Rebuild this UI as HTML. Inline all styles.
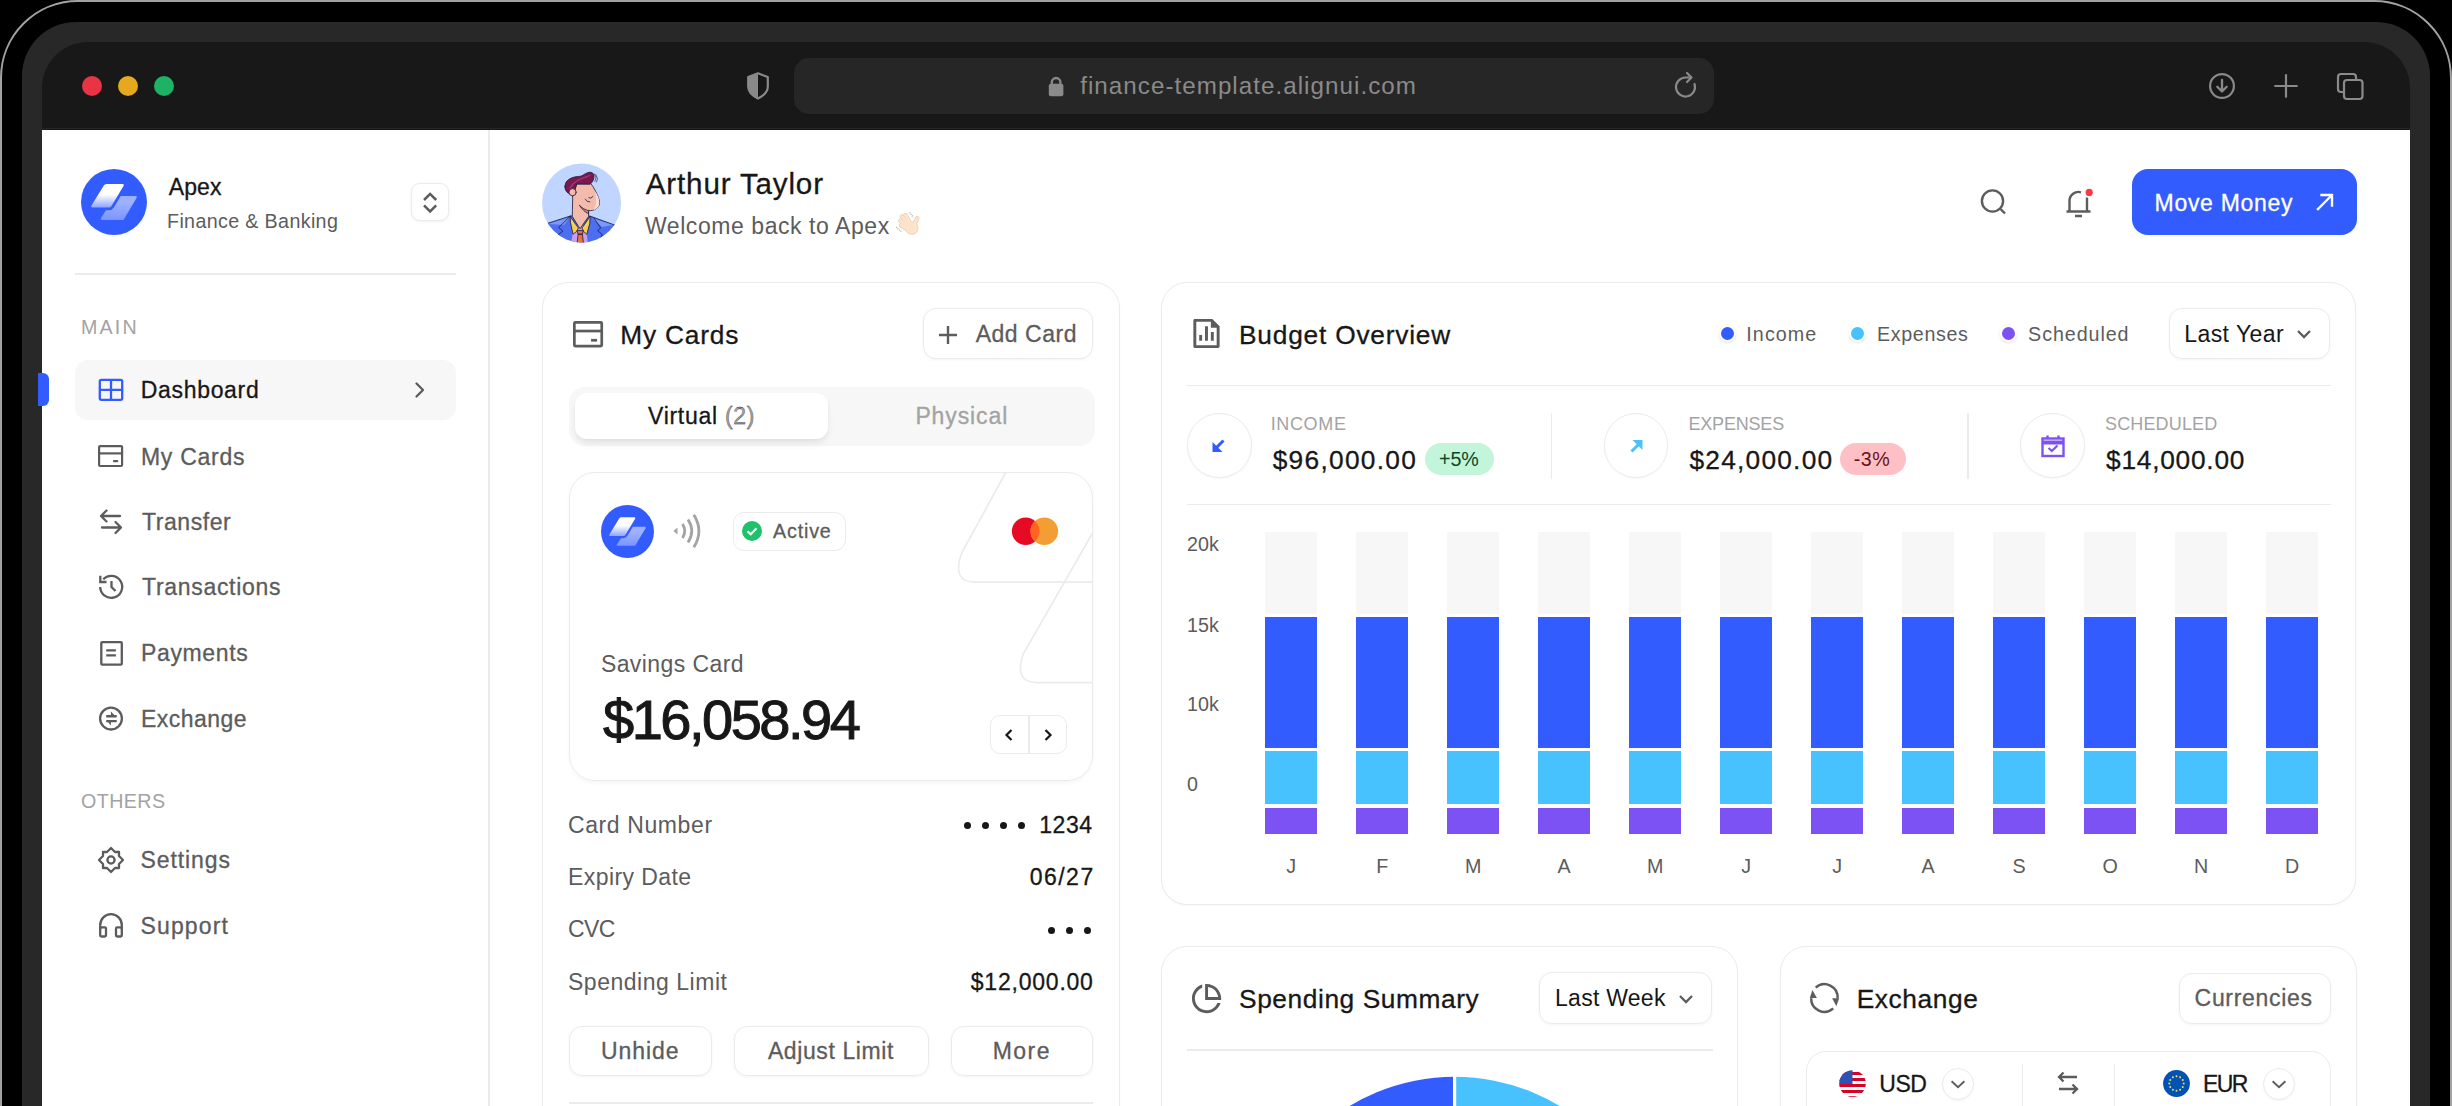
<!DOCTYPE html>
<html><head><meta charset="utf-8"><style>
html,body{margin:0;padding:0;}
body{width:2452px;height:1106px;overflow:hidden;position:relative;background:#000;font-family:"Liberation Sans", sans-serif;}
.t{position:absolute;white-space:nowrap;font-family:"Liberation Sans", sans-serif;}
svg{overflow:visible;}
</style></head><body>
<div style="position:absolute;left:0;top:0;width:2448px;height:1300px;border:2px solid #A2A2A2;border-radius:78px;background:#000"></div>
<div style="position:absolute;left:22.00px;top:22.00px;width:2408.00px;height:1300.00px;background:#282828;border-radius:54px;"></div>
<div style="position:absolute;left:42.00px;top:42.00px;width:2368.00px;height:1300.00px;background:#181818;border-radius:46px;"></div>
<div style="position:absolute;left:42.00px;top:128.00px;width:2368.00px;height:1.00px;background:#252525;"></div>
<div style="position:absolute;left:42.00px;top:130.00px;width:2368.00px;height:1000.00px;background:#FFFFFF;"></div>
<div style="position:absolute;left:82.00px;top:76.00px;width:20.00px;height:20.00px;background:#E93445;border-radius:50%;"></div>
<div style="position:absolute;left:118.00px;top:76.00px;width:20.00px;height:20.00px;background:#E5A81E;border-radius:50%;"></div>
<div style="position:absolute;left:154.00px;top:76.00px;width:20.00px;height:20.00px;background:#1DB264;border-radius:50%;"></div>
<svg style="position:absolute;left:747.00px;top:72.00px;" width="22.00" height="28.00" viewBox="0 0 22 28"><path d="M11 1.3 L20.8 5 V14.5 C20.8 19.5 16.5 23.8 11 26.6 C5.5 23.8 1.2 19.5 1.2 14.5 V5 Z" fill="none" stroke="#8A8A8A" stroke-width="2.2" stroke-linejoin="round"/><path d="M11 1.3 L1.2 5 V14.5 C1.2 19.5 5.5 23.8 11 26.6 Z" fill="#8A8A8A"/></svg>
<div style="position:absolute;left:794.00px;top:58.00px;width:920.00px;height:56.00px;background:#262626;border-radius:15px;"></div>
<svg style="position:absolute;left:1046.00px;top:75.00px;" width="20.00" height="24.00" viewBox="0 0 20 24"><rect x="2.8" y="8.7" width="14.6" height="12.6" rx="2" fill="#8A8A8A"/><path d="M5.8 10 V7.3 A4.3 4.3 0 0 1 14.4 7.3 V10" fill="none" stroke="#8A8A8A" stroke-width="2.3"/></svg>
<div class="t" id="t0" style="top:73.53px;font-size:24.2px;line-height:24.2px;color:#8A8A8A;letter-spacing:1.030px;left:1080.20px;">finance-template.alignui.com</div>
<svg style="position:absolute;left:1672.00px;top:70.00px;" width="30.00" height="32.00" viewBox="0 0 30 32"><path d="M22.5 14 A9.5 9.5 0 1 1 13.5 7.5 L19 7.5" fill="none" stroke="#8A8A8A" stroke-width="2.2" stroke-linecap="round"/><path d="M15 3 L19.5 7.5 L15 12" fill="none" stroke="#8A8A8A" stroke-width="2.2" stroke-linecap="round" stroke-linejoin="round"/></svg>
<svg style="position:absolute;left:2206.00px;top:70.00px;" width="32.00" height="32.00" viewBox="0 0 32 32"><circle cx="16" cy="16" r="11.9" fill="none" stroke="#8A8A8A" stroke-width="2.2"/><path d="M16 9.8 V21.5 M11.3 16.8 L16 21.5 L20.7 16.8" fill="none" stroke="#8A8A8A" stroke-width="2.3" stroke-linecap="round" stroke-linejoin="round"/></svg>
<svg style="position:absolute;left:2270.00px;top:70.00px;" width="32.00" height="32.00" viewBox="0 0 32 32"><path d="M16 5.2 V26.8 M5.2 16 H26.8" fill="none" stroke="#8A8A8A" stroke-width="2.2" stroke-linecap="round"/></svg>
<svg style="position:absolute;left:2334.00px;top:70.00px;" width="32.00" height="32.00" viewBox="0 0 32 32"><rect x="4" y="4" width="18" height="18" rx="3" fill="none" stroke="#8A8A8A" stroke-width="2.2"/><rect x="10" y="10" width="18.5" height="19" rx="3" fill="#181818" stroke="#8A8A8A" stroke-width="2.2"/></svg>
<div style="position:absolute;left:487.50px;top:130.00px;width:2.00px;height:1000.00px;background:#EBEBEB;"></div>
<svg style="position:absolute;left:81.30px;top:169.10px;" width="66.00" height="66.00" viewBox="0 0 66 66"><defs><linearGradient id="g181" x1="0" y1="0" x2="0" y2="1"><stop offset="0.45" stop-color="#fff"/><stop offset="1" stop-color="#fff" stop-opacity="0.45"/></linearGradient><linearGradient id="g281" x1="0" y1="0" x2="0" y2="1"><stop offset="0.3" stop-color="#fff" stop-opacity="0.52"/><stop offset="1" stop-color="#fff" stop-opacity="0.35"/></linearGradient></defs><circle cx="33" cy="33" r="33" fill="#335CFF"/><path d="M34 27.1 H54.5 Q56.5 27.1 55.5 29 L42.5 50.9 H21 Q19 50.9 20 49 Z" fill="url(#g281)"/><path d="M25.5 15.1 H41.5 Q43.5 15.1 42.5 17 L30.5 37 Q29.6 38.5 28 38.5 H11.5 Q9.5 38.5 10.5 36.6 L22.8 16.6 Q23.6 15.1 25.5 15.1 Z" fill="#335CFF" stroke="#335CFF" stroke-width="5.5" stroke-linejoin="round"/><path d="M25.5 15.1 H41.5 Q43.5 15.1 42.5 17 L30.5 37 Q29.6 38.5 28 38.5 H11.5 Q9.5 38.5 10.5 36.6 L22.8 16.6 Q23.6 15.1 25.5 15.1 Z" fill="url(#g181)"/></svg>
<div class="t" id="t1" style="top:175.55px;font-size:23px;line-height:23px;color:#171717;-webkit-text-stroke:0.3px #171717;letter-spacing:0.067px;left:168.80px;">Apex</div>
<div class="t" id="t2" style="top:212.25px;font-size:19.7px;line-height:19.7px;color:#5C5C5C;letter-spacing:0.350px;left:167.00px;">Finance &amp; Banking</div>
<div style="position:absolute;left:411.00px;top:183.00px;width:38.00px;height:38.00px;border:1.6px solid #EBEBEB;border-radius:9px;box-sizing:border-box;box-shadow:0 1px 3px rgba(0,0,0,0.06);background:#fff;"></div>
<svg style="position:absolute;left:411.00px;top:183.00px;" width="38.00" height="38.00" viewBox="0 0 38 38"><path d="M13 17 L19.1 10.9 L25.2 17 M13 22.3 L19.1 28.4 L25.2 22.3" fill="none" stroke="#5C5C5C" stroke-width="2.5"/></svg>
<div style="position:absolute;left:75.00px;top:272.50px;width:381.00px;height:2.00px;background:#EBEBEB;"></div>
<div class="t" id="t3" style="top:318.06px;font-size:19.7px;line-height:19.7px;color:#A3A3A3;letter-spacing:2.133px;left:81.00px;">MAIN</div>
<div style="position:absolute;left:75.00px;top:360.00px;width:381.00px;height:59.50px;background:#F7F7F7;border-radius:13px;"></div>
<div style="position:absolute;left:38.00px;top:373.00px;width:11.00px;height:33.00px;background:#335CFF;border-radius:0 6px 6px 0;"></div>
<svg style="position:absolute;left:96.00px;top:376.00px;" width="30.00" height="28.00" viewBox="0 0 30 28"><rect x="3.8" y="3.8" width="22.4" height="20" rx="1.5" fill="none" stroke="#335CFF" stroke-width="2.3"/><path d="M15 3.8 V23.8 M3.8 13.8 H26.2" stroke="#335CFF" stroke-width="2.3"/></svg>
<div class="t" id="t4" style="top:379.25px;font-size:23px;line-height:23px;color:#171717;-webkit-text-stroke:0.3px #171717;letter-spacing:0.675px;left:140.80px;">Dashboard</div>
<svg style="position:absolute;left:410.00px;top:378.00px;" width="20.00" height="24.00" viewBox="0 0 20 24"><path d="M6.5 5.5 L13 12 L6.5 18.5" fill="none" stroke="#5C5C5C" stroke-width="2.3" stroke-linecap="round" stroke-linejoin="round"/></svg>
<div class="t" id="t5" style="top:445.85px;font-size:23px;line-height:23px;color:#5C5C5C;-webkit-text-stroke:0.3px #5C5C5C;letter-spacing:0.714px;left:141.00px;">My Cards</div>
<div class="t" id="t6" style="top:510.95px;font-size:23px;line-height:23px;color:#5C5C5C;-webkit-text-stroke:0.3px #5C5C5C;letter-spacing:0.571px;left:142.00px;">Transfer</div>
<div class="t" id="t7" style="top:576.45px;font-size:23px;line-height:23px;color:#5C5C5C;-webkit-text-stroke:0.3px #5C5C5C;letter-spacing:0.691px;left:142.00px;">Transactions</div>
<div class="t" id="t8" style="top:641.95px;font-size:23px;line-height:23px;color:#5C5C5C;-webkit-text-stroke:0.3px #5C5C5C;letter-spacing:0.629px;left:141.00px;">Payments</div>
<div class="t" id="t9" style="top:708.05px;font-size:23px;line-height:23px;color:#5C5C5C;-webkit-text-stroke:0.3px #5C5C5C;letter-spacing:0.457px;left:141.00px;">Exchange</div>
<svg style="position:absolute;left:98.30px;top:444.60px;" width="25.20" height="22.10" viewBox="0 0 25.2 22.1"><rect x="1.1" y="1.1" width="23.0" height="19.900000000000002" rx="1" fill="none" stroke="#5C5C5C" stroke-width="2.2"/><path d="M1.1 8.398000000000001 H24.099999999999998" stroke="#5C5C5C" stroke-width="2.2"/><path d="M15.12 16.133 H20.16" stroke="#5C5C5C" stroke-width="2.2"/></svg>
<svg style="position:absolute;left:96.00px;top:506.50px;" width="30.00" height="30.00" viewBox="0 0 30 30"><path d="M5 9 H24 M10.5 3.5 L5 9 L10.5 14.5 M6 20.5 H25 M19.5 15 L25 20.5 L19.5 26" fill="none" stroke="#5C5C5C" stroke-width="2.3" stroke-linecap="round" stroke-linejoin="round"/></svg>
<svg style="position:absolute;left:96.00px;top:572.00px;" width="30.00" height="30.00" viewBox="0 0 30 30"><path d="M4.2 15 A11 11 0 1 0 7.2 7.3" fill="none" stroke="#5C5C5C" stroke-width="2.3"/><path d="M4.3 3.8 V10 H10.5" fill="none" stroke="#5C5C5C" stroke-width="2.3"/><path d="M15.5 9 V15 L19.5 19" fill="none" stroke="#5C5C5C" stroke-width="2.3"/></svg>
<svg style="position:absolute;left:98.00px;top:639.00px;" width="26.00" height="28.00" viewBox="0 0 26 28"><rect x="3.3" y="3.1" width="20.5" height="22.6" rx="1" fill="none" stroke="#5C5C5C" stroke-width="2.3"/><path d="M8.2 11.4 H17.9 M8.2 16.4 H17.9" stroke="#5C5C5C" stroke-width="2.2"/></svg>
<svg style="position:absolute;left:96.00px;top:704.00px;" width="30.00" height="30.00" viewBox="0 0 30 30"><circle cx="15" cy="14.6" r="10.9" fill="none" stroke="#5C5C5C" stroke-width="2.3"/><path d="M10.2 11.1 H20.7 V13.4 H10.2 Z M14.9 13.4 V7.6 L20.7 13.4 Z" fill="#5C5C5C"/><path d="M10.2 16 H20.7 V18.3 H10.2 Z M14.9 16 V21.5 L10.2 16 Z" fill="#5C5C5C"/></svg>
<div class="t" id="t10" style="top:791.55px;font-size:19.7px;line-height:19.7px;color:#A3A3A3;letter-spacing:0.400px;left:81.00px;">OTHERS</div>
<div class="t" id="t11" style="top:849.25px;font-size:23px;line-height:23px;color:#5C5C5C;-webkit-text-stroke:0.3px #5C5C5C;letter-spacing:0.914px;left:140.50px;">Settings</div>
<div class="t" id="t12" style="top:914.85px;font-size:23px;line-height:23px;color:#5C5C5C;-webkit-text-stroke:0.3px #5C5C5C;letter-spacing:1.133px;left:140.50px;">Support</div>
<svg style="position:absolute;left:96.00px;top:845.00px;" width="30.00" height="30.00" viewBox="0 0 30 30"><path d="M15.00 3.00 L19.00 7.00 L23.00 7.00 L23.00 11.00 L27.00 15.00 L23.00 19.00 L23.00 23.00 L19.00 23.00 L15.00 27.00 L11.00 23.00 L7.00 23.00 L7.00 19.00 L3.00 15.00 L7.00 11.00 L7.00 7.00 L11.00 7.00 Z" fill="none" stroke="#5C5C5C" stroke-width="2.3" stroke-linejoin="round"/><circle cx="15" cy="15" r="3.6" fill="none" stroke="#5C5C5C" stroke-width="2.3"/></svg>
<svg style="position:absolute;left:96.00px;top:910.00px;" width="30.00" height="30.00" viewBox="0 0 30 30"><path d="M4.2 19.5 V15 A10.8 10.8 0 0 1 25.8 15 V19.5" fill="none" stroke="#5C5C5C" stroke-width="2.3"/><rect x="4.2" y="17.3" width="5.8" height="9.2" rx="1.2" fill="none" stroke="#5C5C5C" stroke-width="2.3"/><rect x="20" y="17.3" width="5.8" height="9.2" rx="1.2" fill="none" stroke="#5C5C5C" stroke-width="2.3"/></svg>
<svg style="position:absolute;left:540.00px;top:160.50px;" width="84.00" height="84.00" viewBox="0 0 84 84"><defs><clipPath id="avc"><circle cx="41.6" cy="41.9" r="39.5"/></clipPath></defs><circle cx="41.6" cy="41.9" r="39.5" fill="#C0D5FF"/><g clip-path="url(#avc)" stroke="#1B1B3A" stroke-width="0.8" stroke-linejoin="round" stroke-linecap="round"><path d="M4 63.5 L30.3 55 L49.8 55 L76 64.5 L84 90 L0 90 Z" fill="#4B6FF0"/><path d="M8 63 L30 56 L24 64 Z M52 57 L73 64 L62 66 Z" fill="#7D98F6" stroke="none"/><path d="M30.3 55 L18.7 66.5 L22.9 70.2 L17.9 74 L30 90" fill="none"/><path d="M53.5 56.5 L60.7 66.9 L57.6 69.6 L62.2 73.5 L54 90" fill="none"/><path d="M34 64 L46 64 L48.5 90 L30 90 Z" fill="#C89DF4" stroke="none"/><path d="M32.7 35 L32.3 55.5 L40 67.7 L48.6 55.5 L48.6 49.6 C51 49.8 54 49.5 56.5 47.5 C60 45 60 41 58.5 37 C57 32 53.5 26 50.6 22.3 L36.6 23 C35.5 27 34.5 31 32.7 35 Z" fill="#F3BBAC"/><path d="M55 30 C58.5 35 60.5 41 58.5 45.5 C57 47.5 55 48.8 53 49.3 C56 46 57 40 55 30 Z" fill="#F9DDD5" stroke="none"/><path d="M39.7 44.6 C42 48.5 45 51 48.5 52.8 L48.6 49.6 C45 48.8 42 47 39.7 44.6 Z" fill="#EE8A74"/><path d="M30.2 55.5 L38.4 67 L36.6 70.5 L33 73.3 L30.6 62 Z" fill="#F5CF52"/><path d="M50 55.5 L42 67 L43.6 70.5 L46.8 73.3 L49.6 63 Z" fill="#F5CF52"/><path d="M37.4 69.6 L43.5 69.6 L42.4 73.2 L38.5 73.2 Z M38.5 73.2 L42.4 73.2 L43.6 84 L37.3 84 Z" fill="#E9742F"/><path d="M24.9 25.7 C25 21 28 18 33.4 16.3 C37 15.2 40.4 15.6 42 14.8 C44 13.5 46.5 11.5 50 11.2 C53 11.3 54.5 13.5 53.9 16.5 C53.5 19.5 52 22 49.8 23.3 L36.6 23 C35.8 26 35 29 34.2 30.8 C32.5 33 30 33.2 28 32 C26 30.5 25 28.5 24.9 25.7 Z" fill="#7A1850"/><path d="M30 27 C34 19 44 17 50 14.5" fill="none" stroke="#A33A78" stroke-width="1.2"/><circle cx="32.6" cy="31.2" r="3.6" fill="#F3BBAC"/><path d="M48.8 36.8 Q50.8 38.3 52.9 35.6 M45.2 38.1 Q47 41.3 49.8 41" fill="none"/><path d="M54.5 12.8 Q57.5 16 55 20.5 M55.8 13.5 Q58.8 17.5 56.8 21" fill="none" stroke-width="0.6"/></g></svg>
<div class="t" id="t13" style="top:169.44px;font-size:29.6px;line-height:29.6px;color:#171717;-webkit-text-stroke:0.3px #171717;letter-spacing:0.833px;left:645.80px;">Arthur Taylor</div>
<div class="t" id="t14" style="top:214.55px;font-size:23px;line-height:23px;color:#5C5C5C;letter-spacing:0.558px;left:645.00px;">Welcome back to Apex</div>
<svg style="position:absolute;left:890.00px;top:205.00px;" width="36.00" height="36.00" viewBox="0 0 36 36"><ellipse cx="21.8" cy="23.2" rx="6.6" ry="6.6" fill="#EBC3A2"/><path d="M20 18.5 L15.6 10.2" stroke="#EBC3A2" stroke-width="4.4" stroke-linecap="round"/><path d="M18.5 19.5 L11.8 11.5" stroke="#EBC3A2" stroke-width="4.4" stroke-linecap="round"/><path d="M17.5 21.5 L10.4 15.8" stroke="#EBC3A2" stroke-width="4.4" stroke-linecap="round"/><path d="M17.5 24 L11.2 20.6" stroke="#EBC3A2" stroke-width="4.4" stroke-linecap="round"/><path d="M23.5 21 L27.3 13.2" stroke="#EBC3A2" stroke-width="4.4" stroke-linecap="round"/><ellipse cx="21.8" cy="23.2" rx="6.1" ry="6.1" fill="#FCE3CC"/><path d="M20 18.5 L15.6 10.2" stroke="#FCE3CC" stroke-width="3.4" stroke-linecap="round"/><path d="M18.5 19.5 L11.8 11.5" stroke="#FCE3CC" stroke-width="3.4" stroke-linecap="round"/><path d="M17.5 21.5 L10.4 15.8" stroke="#FCE3CC" stroke-width="3.4" stroke-linecap="round"/><path d="M17.5 24 L11.2 20.6" stroke="#FCE3CC" stroke-width="3.4" stroke-linecap="round"/><path d="M23.5 21 L27.3 13.2" stroke="#FCE3CC" stroke-width="3.4" stroke-linecap="round"/><path d="M19.5 7.5 L23.5 12.4 M6.2 22.1 L11.1 26.7" stroke="#B5B5B5" stroke-width="1.6" stroke-dasharray="1 1"/></svg>
<svg style="position:absolute;left:1976.00px;top:184.00px;" width="36.00" height="36.00" viewBox="0 0 36 36"><circle cx="16.5" cy="17" r="10.6" fill="none" stroke="#5C5C5C" stroke-width="2.4"/><path d="M24.5 25 L29 29.5" stroke="#5C5C5C" stroke-width="2.4"/></svg>
<svg style="position:absolute;left:2062.00px;top:184.00px;" width="36.00" height="36.00" viewBox="0 0 36 36"><path d="M7.5 27.5 V17 A9 9 0 0 1 19 8.3" fill="none" stroke="#5C5C5C" stroke-width="2.4"/><path d="M25 13.5 V27.5" fill="none" stroke="#5C5C5C" stroke-width="2.4"/><path d="M4.5 27.5 H28.5 M13 32 H20" stroke="#5C5C5C" stroke-width="2.4"/><circle cx="27.2" cy="8.4" r="5" fill="#fff"/><circle cx="27.2" cy="8.4" r="3.6" fill="#FB3748"/></svg>
<div style="position:absolute;left:2132.00px;top:169.30px;width:225.00px;height:65.50px;background:#335CFF;border-radius:16px;"></div>
<div class="t" id="t15" style="top:192.25px;font-size:23px;line-height:23px;color:#FFFFFF;-webkit-text-stroke:0.3px #FFFFFF;letter-spacing:0.689px;left:2154.60px;">Move Money</div>
<svg style="position:absolute;left:2313.00px;top:190.00px;" width="24.00" height="24.00" viewBox="0 0 24 24"><path d="M5 19 L18.5 5.5 M8.5 5 H19 V15.5" fill="none" stroke="#fff" stroke-width="2.4" stroke-linecap="square"/></svg>
<div style="position:absolute;left:542.20px;top:281.50px;width:577.80px;height:900.00px;border:1.6px solid #EBEBEB;border-radius:26px;box-sizing:border-box;background:#fff;box-shadow:0 1px 2px rgba(10,13,20,0.03);"></div>
<svg style="position:absolute;left:572.80px;top:320.60px;" width="30.10" height="26.40" viewBox="0 0 30.1 26.4"><rect x="1.35" y="1.35" width="27.400000000000002" height="23.7" rx="1" fill="none" stroke="#5C5C5C" stroke-width="2.7"/><path d="M1.35 10.032 H28.75" stroke="#5C5C5C" stroke-width="2.7"/><path d="M18.06 19.272 H24.080000000000002" stroke="#5C5C5C" stroke-width="2.7"/></svg>
<div class="t" id="t16" style="top:321.84px;font-size:26.3px;line-height:26.3px;color:#171717;-webkit-text-stroke:0.3px #171717;letter-spacing:0.800px;left:620.20px;">My Cards</div>
<div style="position:absolute;left:922.70px;top:308.00px;width:170.80px;height:51.30px;border:1.6px solid #EBEBEB;border-radius:13px;box-sizing:border-box;box-shadow:0 1px 3px rgba(10,13,20,0.05);"></div>
<svg style="position:absolute;left:935.00px;top:322.00px;" width="26.00" height="26.00" viewBox="0 0 26 26"><path d="M13 4 V22 M4 13 H22" stroke="#5C5C5C" stroke-width="2.4"/></svg>
<div class="t" id="t17" style="top:323.45px;font-size:23px;line-height:23px;color:#5C5C5C;-webkit-text-stroke:0.3px #5C5C5C;letter-spacing:0.514px;left:975.70px;">Add Card</div>
<div style="position:absolute;left:569.00px;top:387.00px;width:526.00px;height:59.00px;background:#F7F7F7;border-radius:16px;"></div>
<div style="position:absolute;left:574.80px;top:393.00px;width:253.20px;height:45.80px;background:#fff;border-radius:12px;box-shadow:0 6px 10px -2px rgba(27,28,29,0.08), 0 2px 4px rgba(27,28,29,0.04);"></div>
<div class="t" id="t18" style="top:405.25px;font-size:23px;line-height:23px;color:#171717;-webkit-text-stroke:0.3px #171717;letter-spacing:0.720px;left:648.00px;">Virtual <span style="color:#A3A3A3">(2)</span></div>
<div class="t" id="t19" style="top:405.25px;font-size:23px;line-height:23px;color:#A3A3A3;-webkit-text-stroke:0.3px #A3A3A3;letter-spacing:0.886px;left:915.40px;">Physical</div>
<div style="position:absolute;left:569.20px;top:472.30px;width:524.20px;height:308.30px;border:1.6px solid #EBEBEB;border-radius:26px;box-sizing:border-box;box-shadow:0 2px 4px rgba(10,13,20,0.04);overflow:hidden;"></div>
<div style="position:absolute;left:569.2px;top:472.3px;width:524.2px;height:308.3px;border-radius:26px;overflow:hidden"><svg width="524.2" height="308.3" style="position:absolute;left:0;top:0"><path d="M438.0999999999999 -2 L392.4 81.69999999999999 Q382.79999999999995 110.09999999999997 405.79999999999995 110.09999999999997 L560 110.09999999999997" fill="none" stroke="#EBEBEB" stroke-width="1.7"/><path d="M525.5999999999999 57.400000000000034 L454.19999999999993 182.2 Q444.79999999999995 210.59999999999997 467.79999999999995 210.59999999999997 L560 210.59999999999997" fill="none" stroke="#EBEBEB" stroke-width="1.7"/></svg></div>
<svg style="position:absolute;left:600.90px;top:504.60px;" width="53.00" height="53.00" viewBox="0 0 66 66"><defs><linearGradient id="g1600" x1="0" y1="0" x2="0" y2="1"><stop offset="0.45" stop-color="#fff"/><stop offset="1" stop-color="#fff" stop-opacity="0.45"/></linearGradient><linearGradient id="g2600" x1="0" y1="0" x2="0" y2="1"><stop offset="0.3" stop-color="#fff" stop-opacity="0.52"/><stop offset="1" stop-color="#fff" stop-opacity="0.35"/></linearGradient></defs><circle cx="33" cy="33" r="33" fill="#335CFF"/><path d="M34 27.1 H54.5 Q56.5 27.1 55.5 29 L42.5 50.9 H21 Q19 50.9 20 49 Z" fill="url(#g2600)"/><path d="M25.5 15.1 H41.5 Q43.5 15.1 42.5 17 L30.5 37 Q29.6 38.5 28 38.5 H11.5 Q9.5 38.5 10.5 36.6 L22.8 16.6 Q23.6 15.1 25.5 15.1 Z" fill="#335CFF" stroke="#335CFF" stroke-width="5.5" stroke-linejoin="round"/><path d="M25.5 15.1 H41.5 Q43.5 15.1 42.5 17 L30.5 37 Q29.6 38.5 28 38.5 H11.5 Q9.5 38.5 10.5 36.6 L22.8 16.6 Q23.6 15.1 25.5 15.1 Z" fill="url(#g1600)"/></svg>
<svg style="position:absolute;left:668.00px;top:510.00px;" width="36.00" height="42.00" viewBox="0 0 36 42"><path d="M9.5 17.5 L5.5 21 L9.5 24.5 Z" fill="#A3A3A3"/><path d="M14.5 14 Q19 21 14.5 28 M20 9.5 Q27.5 21 20 32.5 M25.8 4.7 Q36 21 25.8 37.3" fill="none" stroke="#A3A3A3" stroke-width="2.8" stroke-linecap="butt"/></svg>
<div style="position:absolute;left:733.00px;top:511.80px;width:112.60px;height:38.80px;border:1.6px solid #EBEBEB;border-radius:11px;box-sizing:border-box;"></div>
<svg style="position:absolute;left:742.40px;top:521.00px;" width="20.00" height="20.00" viewBox="0 0 20 20"><circle cx="10" cy="10" r="10" fill="#1FC16B"/><path d="M5.5 10.2 L8.7 13.2 L14.5 7.3" fill="none" stroke="#fff" stroke-width="2.2"/></svg>
<div class="t" id="t20" style="top:521.95px;font-size:19.7px;line-height:19.7px;color:#5C5C5C;-webkit-text-stroke:0.3px #5C5C5C;letter-spacing:0.840px;left:773.00px;">Active</div>
<svg style="position:absolute;left:1010.00px;top:516.00px;" width="52.00" height="30.00" viewBox="0 0 52 30"><circle cx="15.7" cy="15.2" r="13.8" fill="#E60A24"/><circle cx="34.3" cy="15.2" r="13.8" fill="#F39E35"/><path d="M25 5 A13.8 13.8 0 0 1 25 25.4 A13.8 13.8 0 0 1 25 5 Z" fill="#FF6420"/></svg>
<div class="t" id="t21" style="top:652.75px;font-size:23px;line-height:23px;color:#5C5C5C;letter-spacing:0.418px;left:600.90px;">Savings Card</div>
<div class="t" id="t22" style="top:692.30px;font-size:56px;line-height:56px;color:#171717;-webkit-text-stroke:0.3px #171717;letter-spacing:-2.489px;left:603.00px;-webkit-text-stroke:1px #171717;">$16,058.94</div>
<div style="position:absolute;left:989.50px;top:715.20px;width:77.70px;height:39.00px;border:1.6px solid #EBEBEB;border-radius:10px;box-sizing:border-box;"></div>
<div style="position:absolute;left:1028.00px;top:716.00px;width:1.60px;height:37.40px;background:#EBEBEB;"></div>
<svg style="position:absolute;left:999.00px;top:725.00px;" width="20.00" height="20.00" viewBox="0 0 20 20"><path d="M12.5 5 L7.5 10 L12.5 15" fill="none" stroke="#171717" stroke-width="2.2"/></svg>
<svg style="position:absolute;left:1038.00px;top:725.00px;" width="20.00" height="20.00" viewBox="0 0 20 20"><path d="M7.5 5 L12.5 10 L7.5 15" fill="none" stroke="#171717" stroke-width="2.2"/></svg>
<div style="position:absolute;left:963.60px;top:822.20px;width:7.00px;height:7.00px;background:#171717;border-radius:50%;"></div>
<div style="position:absolute;left:981.60px;top:822.20px;width:7.00px;height:7.00px;background:#171717;border-radius:50%;"></div>
<div style="position:absolute;left:999.90px;top:822.20px;width:7.00px;height:7.00px;background:#171717;border-radius:50%;"></div>
<div style="position:absolute;left:1018.20px;top:822.20px;width:7.00px;height:7.00px;background:#171717;border-radius:50%;"></div>
<div style="position:absolute;left:1047.90px;top:927.10px;width:7.00px;height:7.00px;background:#171717;border-radius:50%;"></div>
<div style="position:absolute;left:1065.60px;top:927.10px;width:7.00px;height:7.00px;background:#171717;border-radius:50%;"></div>
<div style="position:absolute;left:1083.60px;top:927.10px;width:7.00px;height:7.00px;background:#171717;border-radius:50%;"></div>
<div class="t" id="t23" style="top:813.55px;font-size:23px;line-height:23px;color:#5C5C5C;letter-spacing:0.600px;left:568.00px;">Card Number</div>
<div class="t" id="t24" style="top:813.55px;font-size:23px;line-height:23px;color:#171717;-webkit-text-stroke:0.3px #171717;letter-spacing:0.600px;right:1359.30px;">1234</div>
<div class="t" id="t25" style="top:865.55px;font-size:23px;line-height:23px;color:#5C5C5C;letter-spacing:0.420px;left:568.00px;">Expiry Date</div>
<div class="t" id="t26" style="top:865.55px;font-size:23px;line-height:23px;color:#171717;-webkit-text-stroke:0.3px #171717;letter-spacing:1.500px;right:1357.30px;">06/27</div>
<div class="t" id="t27" style="top:918.25px;font-size:23px;line-height:23px;color:#5C5C5C;letter-spacing:-0.600px;left:568.00px;">CVC</div>
<div class="t" id="t28" style="top:971.25px;font-size:23px;line-height:23px;color:#5C5C5C;letter-spacing:0.523px;left:568.00px;">Spending Limit</div>
<div class="t" id="t29" style="top:971.25px;font-size:23px;line-height:23px;color:#171717;-webkit-text-stroke:0.3px #171717;letter-spacing:0.778px;right:1358.30px;">$12,000.00</div>
<div style="position:absolute;left:569.00px;top:1025.70px;width:143.00px;height:50.00px;border:1.6px solid #EBEBEB;border-radius:13px;box-sizing:border-box;box-shadow:0 1px 3px rgba(10,13,20,0.05);"></div>
<div class="t" id="t30" style="top:1039.85px;font-size:23px;line-height:23px;color:#5C5C5C;-webkit-text-stroke:0.3px #5C5C5C;letter-spacing:0.920px;left:601.00px;">Unhide</div>
<div style="position:absolute;left:733.70px;top:1025.70px;width:195.30px;height:50.00px;border:1.6px solid #EBEBEB;border-radius:13px;box-sizing:border-box;box-shadow:0 1px 3px rgba(10,13,20,0.05);"></div>
<div class="t" id="t31" style="top:1039.85px;font-size:23px;line-height:23px;color:#5C5C5C;-webkit-text-stroke:0.3px #5C5C5C;letter-spacing:0.600px;left:767.90px;">Adjust Limit</div>
<div style="position:absolute;left:950.60px;top:1025.70px;width:142.80px;height:50.00px;border:1.6px solid #EBEBEB;border-radius:13px;box-sizing:border-box;box-shadow:0 1px 3px rgba(10,13,20,0.05);"></div>
<div class="t" id="t32" style="top:1039.85px;font-size:23px;line-height:23px;color:#5C5C5C;-webkit-text-stroke:0.3px #5C5C5C;letter-spacing:1.467px;left:992.70px;">More</div>
<div style="position:absolute;left:569.00px;top:1102.00px;width:524.00px;height:1.60px;background:#EBEBEB;"></div>
<div style="position:absolute;left:1161.00px;top:281.50px;width:1195.00px;height:623.80px;border:1.6px solid #EBEBEB;border-radius:26px;box-sizing:border-box;background:#fff;box-shadow:0 1px 2px rgba(10,13,20,0.03);"></div>
<svg style="position:absolute;left:1188.83px;top:316.29px;" width="35.00" height="35.00" viewBox="0 0 35 35"><path transform="scale(1.457)" d="M11 7H13V17H11V7ZM15 11H17V17H15V11ZM7 13H9V17H7V13ZM15 4H5V20H19V8H15V4ZM3 2.9918C3 2.44405 3.44749 2 3.9985 2H16L20.9997 7L21 20.9925C21 21.5489 20.5551 22 20.0066 22H3.9934C3.44476 22 3 21.5447 3 21.0082V2.9918Z" fill="#5C5C5C"/></svg>
<div class="t" id="t33" style="top:321.84px;font-size:26.3px;line-height:26.3px;color:#171717;-webkit-text-stroke:0.3px #171717;letter-spacing:0.786px;left:1239.00px;">Budget Overview</div>
<div style="position:absolute;left:1718.90px;top:325.30px;width:17.00px;height:17.00px;background:#335CFF;border:2.5px solid #fff;border-radius:50%;box-sizing:border-box;box-shadow:0 1px 3px rgba(0,0,0,0.12);"></div>
<div class="t" id="t34" style="top:324.75px;font-size:19.7px;line-height:19.7px;color:#5C5C5C;letter-spacing:1.080px;left:1746.30px;">Income</div>
<div style="position:absolute;left:1849.00px;top:325.30px;width:17.00px;height:17.00px;background:#47C2FF;border:2.5px solid #fff;border-radius:50%;box-sizing:border-box;box-shadow:0 1px 3px rgba(0,0,0,0.12);"></div>
<div class="t" id="t35" style="top:324.75px;font-size:19.7px;line-height:19.7px;color:#5C5C5C;letter-spacing:0.629px;left:1877.00px;">Expenses</div>
<div style="position:absolute;left:2000.40px;top:325.30px;width:17.00px;height:17.00px;background:#7D52F4;border:2.5px solid #fff;border-radius:50%;box-sizing:border-box;box-shadow:0 1px 3px rgba(0,0,0,0.12);"></div>
<div class="t" id="t36" style="top:324.75px;font-size:19.7px;line-height:19.7px;color:#5C5C5C;letter-spacing:0.925px;left:2028.10px;">Scheduled</div>
<div style="position:absolute;left:2169.20px;top:308.00px;width:160.80px;height:51.30px;border:1.6px solid #EBEBEB;border-radius:13px;box-sizing:border-box;box-shadow:0 1px 3px rgba(10,13,20,0.05);"></div>
<div class="t" id="t37" style="top:323.15px;font-size:23px;line-height:23px;color:#171717;letter-spacing:0.450px;left:2184.20px;">Last Year</div>
<svg style="position:absolute;left:2294.00px;top:324.00px;" width="20.00" height="20.00" viewBox="0 0 20 20"><path d="M4 7 L10 13 L16 7" fill="none" stroke="#5C5C5C" stroke-width="2.3"/></svg>
<div style="position:absolute;left:1186.70px;top:384.70px;width:1144.00px;height:1.60px;background:#EBEBEB;"></div>
<div style="position:absolute;left:1186.70px;top:503.60px;width:1144.00px;height:1.60px;background:#EBEBEB;"></div>
<div style="position:absolute;left:1550.50px;top:413.00px;width:1.60px;height:65.50px;background:#EBEBEB;"></div>
<div style="position:absolute;left:1967.10px;top:413.00px;width:1.60px;height:65.50px;background:#EBEBEB;"></div>
<div style="position:absolute;left:1187.20px;top:413.30px;width:64.40px;height:64.40px;border:1.6px solid #EBEBEB;border-radius:50%;box-sizing:border-box;box-shadow:0 1px 2px rgba(10,13,20,0.04);"></div>
<svg style="position:absolute;left:1203.40px;top:429.50px;" width="32.00" height="32.00" viewBox="0 0 32 32"><path d="M20.5 10.5 L11.5 19.5" stroke="#335CFF" stroke-width="3"/><path d="M9.5 12 V22 H19.5 Z" fill="#335CFF"/></svg>
<div style="position:absolute;left:1603.80px;top:413.30px;width:64.40px;height:64.40px;border:1.6px solid #EBEBEB;border-radius:50%;box-sizing:border-box;box-shadow:0 1px 2px rgba(10,13,20,0.04);"></div>
<svg style="position:absolute;left:1620.00px;top:429.50px;" width="32.00" height="32.00" viewBox="0 0 32 32"><path d="M11.5 21.5 L20.5 12.5" stroke="#47C2FF" stroke-width="3"/><path d="M12.5 10 H22.5 V20 Z" fill="#47C2FF"/></svg>
<div style="position:absolute;left:2020.30px;top:413.30px;width:64.40px;height:64.40px;border:1.6px solid #EBEBEB;border-radius:50%;box-sizing:border-box;box-shadow:0 1px 2px rgba(10,13,20,0.04);"></div>
<svg style="position:absolute;left:2036.50px;top:429.50px;" width="32.00" height="32.00" viewBox="0 0 32 32"><rect x="5.5" y="8.5" width="21" height="17.5" fill="none" stroke="#7D52F4" stroke-width="2.4"/><path d="M5.5 12.5 H26.5" stroke="#7D52F4" stroke-width="4"/><path d="M10.5 5.5 V9 M21.5 5.5 V9" stroke="#7D52F4" stroke-width="2.4"/><path d="M11.5 18 L14.8 21 L20.5 15.5" fill="none" stroke="#7D52F4" stroke-width="2.2"/></svg>
<div class="t" id="t38" style="top:415.00px;font-size:18px;line-height:18px;color:#A3A3A3;letter-spacing:0.640px;left:1270.70px;">INCOME</div>
<div class="t" id="t39" style="top:447.14px;font-size:26.3px;line-height:26.3px;color:#171717;-webkit-text-stroke:0.3px #171717;letter-spacing:1.289px;left:1272.70px;">$96,000.00</div>
<div style="position:absolute;left:1425.30px;top:442.50px;width:68.50px;height:32.50px;background:#C2F5DA;border-radius:17px;"></div>
<div class="t" id="t40" style="top:450.06px;font-size:19.7px;line-height:19.7px;color:#0B4627;letter-spacing:-0.100px;left:1439.00px;">+5%</div>
<div class="t" id="t41" style="top:415.00px;font-size:18px;line-height:18px;color:#A3A3A3;letter-spacing:-0.200px;left:1688.50px;">EXPENSES</div>
<div class="t" id="t42" style="top:447.14px;font-size:26.3px;line-height:26.3px;color:#171717;-webkit-text-stroke:0.3px #171717;letter-spacing:1.222px;left:1689.50px;">$24,000.00</div>
<div style="position:absolute;left:1839.70px;top:442.50px;width:66.00px;height:32.50px;background:#FFC0C5;border-radius:17px;"></div>
<div class="t" id="t43" style="top:450.06px;font-size:19.7px;line-height:19.7px;color:#681219;letter-spacing:0.500px;left:1853.80px;">-3%</div>
<div class="t" id="t44" style="top:415.00px;font-size:18px;line-height:18px;color:#A3A3A3;letter-spacing:0.150px;left:2105.00px;">SCHEDULED</div>
<div class="t" id="t45" style="top:447.14px;font-size:26.3px;line-height:26.3px;color:#171717;-webkit-text-stroke:0.3px #171717;letter-spacing:0.756px;left:2106.00px;">$14,000.00</div>
<div class="t" id="t46" style="top:535.05px;font-size:19.7px;line-height:19.7px;color:#5C5C5C;left:1187.00px;">20k</div>
<div class="t" id="t47" style="top:615.65px;font-size:19.7px;line-height:19.7px;color:#5C5C5C;left:1187.00px;">15k</div>
<div class="t" id="t48" style="top:695.35px;font-size:19.7px;line-height:19.7px;color:#5C5C5C;left:1187.00px;">10k</div>
<div class="t" id="t49" style="top:775.05px;font-size:19.7px;line-height:19.7px;color:#5C5C5C;left:1187.00px;">0</div>
<div style="position:absolute;left:1265.30px;top:531.50px;width:51.80px;height:82.20px;background:#F7F7F7;"></div>
<div style="position:absolute;left:1265.30px;top:616.80px;width:51.80px;height:130.80px;background:#335CFF;"></div>
<div style="position:absolute;left:1265.30px;top:751.30px;width:51.80px;height:52.70px;background:#47C2FF;"></div>
<div style="position:absolute;left:1265.30px;top:807.70px;width:51.80px;height:25.90px;background:#7D52F4;"></div>
<div class="t" id="t50" style="top:857.35px;font-size:19.7px;line-height:19.7px;color:#5C5C5C;left:791.20px;width:1000px;text-align:center;">J</div>
<div style="position:absolute;left:1356.30px;top:531.50px;width:51.80px;height:82.20px;background:#F7F7F7;"></div>
<div style="position:absolute;left:1356.30px;top:616.80px;width:51.80px;height:130.80px;background:#335CFF;"></div>
<div style="position:absolute;left:1356.30px;top:751.30px;width:51.80px;height:52.70px;background:#47C2FF;"></div>
<div style="position:absolute;left:1356.30px;top:807.70px;width:51.80px;height:25.90px;background:#7D52F4;"></div>
<div class="t" id="t51" style="top:857.35px;font-size:19.7px;line-height:19.7px;color:#5C5C5C;left:882.20px;width:1000px;text-align:center;">F</div>
<div style="position:absolute;left:1447.30px;top:531.50px;width:51.80px;height:82.20px;background:#F7F7F7;"></div>
<div style="position:absolute;left:1447.30px;top:616.80px;width:51.80px;height:130.80px;background:#335CFF;"></div>
<div style="position:absolute;left:1447.30px;top:751.30px;width:51.80px;height:52.70px;background:#47C2FF;"></div>
<div style="position:absolute;left:1447.30px;top:807.70px;width:51.80px;height:25.90px;background:#7D52F4;"></div>
<div class="t" id="t52" style="top:857.35px;font-size:19.7px;line-height:19.7px;color:#5C5C5C;left:973.20px;width:1000px;text-align:center;">M</div>
<div style="position:absolute;left:1538.30px;top:531.50px;width:51.80px;height:82.20px;background:#F7F7F7;"></div>
<div style="position:absolute;left:1538.30px;top:616.80px;width:51.80px;height:130.80px;background:#335CFF;"></div>
<div style="position:absolute;left:1538.30px;top:751.30px;width:51.80px;height:52.70px;background:#47C2FF;"></div>
<div style="position:absolute;left:1538.30px;top:807.70px;width:51.80px;height:25.90px;background:#7D52F4;"></div>
<div class="t" id="t53" style="top:857.35px;font-size:19.7px;line-height:19.7px;color:#5C5C5C;left:1064.20px;width:1000px;text-align:center;">A</div>
<div style="position:absolute;left:1629.30px;top:531.50px;width:51.80px;height:82.20px;background:#F7F7F7;"></div>
<div style="position:absolute;left:1629.30px;top:616.80px;width:51.80px;height:130.80px;background:#335CFF;"></div>
<div style="position:absolute;left:1629.30px;top:751.30px;width:51.80px;height:52.70px;background:#47C2FF;"></div>
<div style="position:absolute;left:1629.30px;top:807.70px;width:51.80px;height:25.90px;background:#7D52F4;"></div>
<div class="t" id="t54" style="top:857.35px;font-size:19.7px;line-height:19.7px;color:#5C5C5C;left:1155.20px;width:1000px;text-align:center;">M</div>
<div style="position:absolute;left:1720.30px;top:531.50px;width:51.80px;height:82.20px;background:#F7F7F7;"></div>
<div style="position:absolute;left:1720.30px;top:616.80px;width:51.80px;height:130.80px;background:#335CFF;"></div>
<div style="position:absolute;left:1720.30px;top:751.30px;width:51.80px;height:52.70px;background:#47C2FF;"></div>
<div style="position:absolute;left:1720.30px;top:807.70px;width:51.80px;height:25.90px;background:#7D52F4;"></div>
<div class="t" id="t55" style="top:857.35px;font-size:19.7px;line-height:19.7px;color:#5C5C5C;left:1246.20px;width:1000px;text-align:center;">J</div>
<div style="position:absolute;left:1811.30px;top:531.50px;width:51.80px;height:82.20px;background:#F7F7F7;"></div>
<div style="position:absolute;left:1811.30px;top:616.80px;width:51.80px;height:130.80px;background:#335CFF;"></div>
<div style="position:absolute;left:1811.30px;top:751.30px;width:51.80px;height:52.70px;background:#47C2FF;"></div>
<div style="position:absolute;left:1811.30px;top:807.70px;width:51.80px;height:25.90px;background:#7D52F4;"></div>
<div class="t" id="t56" style="top:857.35px;font-size:19.7px;line-height:19.7px;color:#5C5C5C;left:1337.20px;width:1000px;text-align:center;">J</div>
<div style="position:absolute;left:1902.30px;top:531.50px;width:51.80px;height:82.20px;background:#F7F7F7;"></div>
<div style="position:absolute;left:1902.30px;top:616.80px;width:51.80px;height:130.80px;background:#335CFF;"></div>
<div style="position:absolute;left:1902.30px;top:751.30px;width:51.80px;height:52.70px;background:#47C2FF;"></div>
<div style="position:absolute;left:1902.30px;top:807.70px;width:51.80px;height:25.90px;background:#7D52F4;"></div>
<div class="t" id="t57" style="top:857.35px;font-size:19.7px;line-height:19.7px;color:#5C5C5C;left:1428.20px;width:1000px;text-align:center;">A</div>
<div style="position:absolute;left:1993.30px;top:531.50px;width:51.80px;height:82.20px;background:#F7F7F7;"></div>
<div style="position:absolute;left:1993.30px;top:616.80px;width:51.80px;height:130.80px;background:#335CFF;"></div>
<div style="position:absolute;left:1993.30px;top:751.30px;width:51.80px;height:52.70px;background:#47C2FF;"></div>
<div style="position:absolute;left:1993.30px;top:807.70px;width:51.80px;height:25.90px;background:#7D52F4;"></div>
<div class="t" id="t58" style="top:857.35px;font-size:19.7px;line-height:19.7px;color:#5C5C5C;left:1519.20px;width:1000px;text-align:center;">S</div>
<div style="position:absolute;left:2084.30px;top:531.50px;width:51.80px;height:82.20px;background:#F7F7F7;"></div>
<div style="position:absolute;left:2084.30px;top:616.80px;width:51.80px;height:130.80px;background:#335CFF;"></div>
<div style="position:absolute;left:2084.30px;top:751.30px;width:51.80px;height:52.70px;background:#47C2FF;"></div>
<div style="position:absolute;left:2084.30px;top:807.70px;width:51.80px;height:25.90px;background:#7D52F4;"></div>
<div class="t" id="t59" style="top:857.35px;font-size:19.7px;line-height:19.7px;color:#5C5C5C;left:1610.20px;width:1000px;text-align:center;">O</div>
<div style="position:absolute;left:2175.30px;top:531.50px;width:51.80px;height:82.20px;background:#F7F7F7;"></div>
<div style="position:absolute;left:2175.30px;top:616.80px;width:51.80px;height:130.80px;background:#335CFF;"></div>
<div style="position:absolute;left:2175.30px;top:751.30px;width:51.80px;height:52.70px;background:#47C2FF;"></div>
<div style="position:absolute;left:2175.30px;top:807.70px;width:51.80px;height:25.90px;background:#7D52F4;"></div>
<div class="t" id="t60" style="top:857.35px;font-size:19.7px;line-height:19.7px;color:#5C5C5C;left:1701.20px;width:1000px;text-align:center;">N</div>
<div style="position:absolute;left:2266.30px;top:531.50px;width:51.80px;height:82.20px;background:#F7F7F7;"></div>
<div style="position:absolute;left:2266.30px;top:616.80px;width:51.80px;height:130.80px;background:#335CFF;"></div>
<div style="position:absolute;left:2266.30px;top:751.30px;width:51.80px;height:52.70px;background:#47C2FF;"></div>
<div style="position:absolute;left:2266.30px;top:807.70px;width:51.80px;height:25.90px;background:#7D52F4;"></div>
<div class="t" id="t61" style="top:857.35px;font-size:19.7px;line-height:19.7px;color:#5C5C5C;left:1792.20px;width:1000px;text-align:center;">D</div>
<div style="position:absolute;left:1161.20px;top:946.20px;width:577.10px;height:400.00px;border:1.6px solid #EBEBEB;border-radius:26px;box-sizing:border-box;background:#fff;box-shadow:0 1px 2px rgba(10,13,20,0.03);"></div>
<svg style="position:absolute;left:1188.57px;top:980.57px;" width="35.00" height="35.00" viewBox="0 0 35 35"><path transform="scale(1.465)" d="M9 2.4578V4.6358C6.06817 5.82318 4 8.69835 4 12C4 16.4183 7.58172 20 12 20C15.3017 20 18.1768 17.9318 19.3642 15H21.5422C20.2679 19.0571 16.4776 22 12 22C6.47715 22 2 17.5228 2 12C2 7.52236 4.94289 3.73207 9 2.4578ZM12 2C17.5228 2 22 6.47715 22 12C22 12.3375 21.9833 12.6711 21.9506 13H11V2.04938C11.3289 2.01672 11.6625 2 12 2ZM13 4.06189V11H19.9381C19.4869 7.38128 16.6187 4.51314 13 4.06189Z" fill="#5C5C5C"/></svg>
<div class="t" id="t62" style="top:986.04px;font-size:26.3px;line-height:26.3px;color:#171717;-webkit-text-stroke:0.3px #171717;letter-spacing:0.587px;left:1239.00px;">Spending Summary</div>
<div style="position:absolute;left:1539.30px;top:972.30px;width:172.40px;height:51.50px;border:1.6px solid #EBEBEB;border-radius:13px;box-sizing:border-box;box-shadow:0 1px 3px rgba(10,13,20,0.05);"></div>
<div class="t" id="t63" style="top:987.15px;font-size:23px;line-height:23px;color:#171717;letter-spacing:0.275px;left:1555.00px;">Last Week</div>
<svg style="position:absolute;left:1676.00px;top:989.00px;" width="20.00" height="20.00" viewBox="0 0 20 20"><path d="M4 7 L10 13 L16 7" fill="none" stroke="#5C5C5C" stroke-width="2.3"/></svg>
<div style="position:absolute;left:1186.80px;top:1049.10px;width:525.90px;height:1.60px;background:#EBEBEB;"></div>
<svg style="position:absolute;left:1250.00px;top:1070.00px;" width="410.00" height="40.00" viewBox="0 0 410 40"><path d="M204.6 6.8 A203.4 203.4 0 0 0 1.2 210 H204.6 Z" fill="#335CFF"/><path d="M204.6 6.8 A203.4 203.4 0 0 1 408 210 H204.6 Z" fill="#47C2FF"/><rect x="203" y="0" width="3.2" height="40" fill="#fff"/></svg>
<div style="position:absolute;left:1780.00px;top:946.20px;width:576.60px;height:400.00px;border:1.6px solid #EBEBEB;border-radius:26px;box-sizing:border-box;background:#fff;box-shadow:0 1px 2px rgba(10,13,20,0.03);"></div>
<svg style="position:absolute;left:1800.00px;top:975.00px;" width="50.00" height="45.00" viewBox="0 0 50 45"><path d="M15.7 12.6 A13.2 13.2 0 0 1 37.6 23.4" fill="none" stroke="#5C5C5C" stroke-width="2.5"/><path d="M32.1 23.2 L39.1 23.2 L36.4 31.3 Z" fill="#5C5C5C"/><path d="M33.2 33.4 A13.2 13.2 0 0 1 11.2 23.2" fill="none" stroke="#5C5C5C" stroke-width="2.5"/><path d="M9.8 23 L16.9 23 L12.4 15.1 Z" fill="#5C5C5C"/></svg>
<div class="t" id="t64" style="top:986.04px;font-size:26.3px;line-height:26.3px;color:#171717;-webkit-text-stroke:0.3px #171717;letter-spacing:0.600px;left:1856.70px;">Exchange</div>
<div style="position:absolute;left:2179.20px;top:972.80px;width:151.50px;height:51.00px;border:1.6px solid #EBEBEB;border-radius:13px;box-sizing:border-box;box-shadow:0 1px 3px rgba(10,13,20,0.05);"></div>
<div class="t" id="t65" style="top:987.15px;font-size:23px;line-height:23px;color:#5C5C5C;-webkit-text-stroke:0.3px #5C5C5C;letter-spacing:0.689px;left:2194.60px;">Currencies</div>
<div style="position:absolute;left:1806.00px;top:1051.40px;width:524.70px;height:120.00px;border:1.6px solid #EBEBEB;border-radius:20px;box-sizing:border-box;"></div>
<svg style="position:absolute;left:1839.20px;top:1070.00px;" width="27.00" height="27.00" viewBox="0 0 27 27"><defs><clipPath id="usc"><circle cx="13.5" cy="13.5" r="13.3"/></clipPath></defs><g clip-path="url(#usc)"><rect width="27" height="27" fill="#fff"/><rect y="2" width="27" height="3" fill="#D80027"/><rect y="8" width="27" height="3" fill="#D80027"/><rect y="14" width="27" height="3" fill="#D80027"/><rect y="20" width="27" height="3" fill="#D80027"/><rect y="26" width="27" height="3" fill="#D80027"/><rect width="13.5" height="14" fill="#2E52B2"/></g></svg>
<div class="t" id="t66" style="top:1072.95px;font-size:23px;line-height:23px;color:#171717;-webkit-text-stroke:0.3px #171717;letter-spacing:-0.500px;left:1879.30px;">USD</div>
<div style="position:absolute;left:1941.60px;top:1067.50px;width:32.00px;height:32.00px;border:1.6px solid #EBEBEB;border-radius:50%;box-sizing:border-box;box-shadow:0 1px 2px rgba(10,13,20,0.05);"></div>
<svg style="position:absolute;left:1947.50px;top:1073.50px;" width="20.00" height="20.00" viewBox="0 0 20 20"><path d="M3.6 7.2 L10 13.2 L16.4 7.2" fill="none" stroke="#5C5C5C" stroke-width="1.9"/></svg>
<div style="position:absolute;left:2021.70px;top:1064.30px;width:1.60px;height:60.00px;background:#EBEBEB;"></div>
<svg style="position:absolute;left:2053.00px;top:1068.00px;" width="30.00" height="30.00" viewBox="0 0 30 30"><path d="M6 9 H24 M10.5 4.5 L6 9 L10.5 13.5 M6 21 H24 M19.5 16.5 L24 21 L19.5 25.5" fill="none" stroke="#5C5C5C" stroke-width="2.3"/></svg>
<div style="position:absolute;left:2113.70px;top:1064.30px;width:1.60px;height:60.00px;background:#EBEBEB;"></div>
<svg style="position:absolute;left:2163.00px;top:1070.00px;" width="27.00" height="27.00" viewBox="0 0 27 27"><circle cx="13.5" cy="13.5" r="13.4" fill="#0052B4"/><circle cx="20.70" cy="13.50" r="1" fill="#FFDA44"/><circle cx="19.74" cy="17.10" r="1" fill="#FFDA44"/><circle cx="17.10" cy="19.74" r="1" fill="#FFDA44"/><circle cx="13.50" cy="20.70" r="1" fill="#FFDA44"/><circle cx="9.90" cy="19.74" r="1" fill="#FFDA44"/><circle cx="7.26" cy="17.10" r="1" fill="#FFDA44"/><circle cx="6.30" cy="13.50" r="1" fill="#FFDA44"/><circle cx="7.26" cy="9.90" r="1" fill="#FFDA44"/><circle cx="9.90" cy="7.26" r="1" fill="#FFDA44"/><circle cx="13.50" cy="6.30" r="1" fill="#FFDA44"/><circle cx="17.10" cy="7.26" r="1" fill="#FFDA44"/><circle cx="19.74" cy="9.90" r="1" fill="#FFDA44"/></svg>
<div class="t" id="t67" style="top:1072.95px;font-size:23px;line-height:23px;color:#171717;-webkit-text-stroke:0.3px #171717;letter-spacing:-1.600px;left:2203.00px;">EUR</div>
<div style="position:absolute;left:2262.50px;top:1067.50px;width:32.00px;height:32.00px;border:1.6px solid #EBEBEB;border-radius:50%;box-sizing:border-box;box-shadow:0 1px 2px rgba(10,13,20,0.05);"></div>
<svg style="position:absolute;left:2268.50px;top:1073.50px;" width="20.00" height="20.00" viewBox="0 0 20 20"><path d="M3.6 7.2 L10 13.2 L16.4 7.2" fill="none" stroke="#5C5C5C" stroke-width="1.9"/></svg>
</body></html>
